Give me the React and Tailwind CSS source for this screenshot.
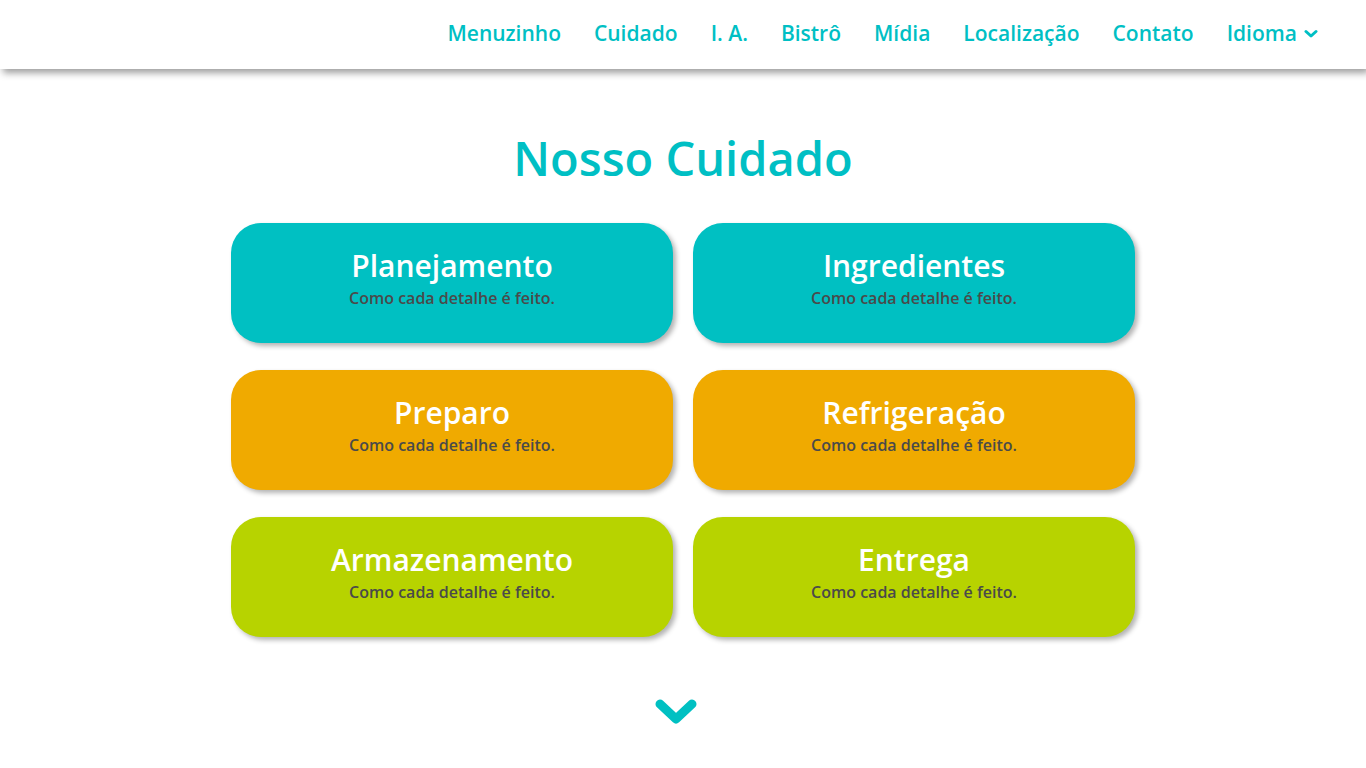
import React from "react";

const links = ["Menuzinho", "Cuidado", "I. A.", "Bistrô", "Mídia", "Localização", "Contato"];

const cards = [
  { title: "Planejamento", color: "bg-[#00c0c2]" },
  { title: "Ingredientes", color: "bg-[#00c0c2]" },
  { title: "Preparo", color: "bg-[#f0aa00]" },
  { title: "Refrigeração", color: "bg-[#f0aa00]" },
  { title: "Armazenamento", color: "bg-[#b7d300]" },
  { title: "Entrega", color: "bg-[#b7d300]" },
];

export default function App() {
  return (
    <div className="min-h-screen bg-white font-['Open_Sans',sans-serif]">
      <header className="h-[69px] bg-white shadow-[3px_4px_7px_rgba(0,0,0,0.38)] flex items-center justify-end pr-[48px] pb-[2px]">
        <nav className="flex items-center gap-[33px] text-[#00bfc4] text-[21px] font-semibold">
          {links.map((l) => (
            <a key={l} href="#" className="leading-none">
              {l}
            </a>
          ))}
          <a href="#" className="flex items-center gap-[7px] leading-none">
            Idioma
            <svg width="14" height="10" viewBox="0 0 14 10">
              <path d="M2 2.5 L7 7 L12 2.5" fill="none" stroke="#00bfc4" strokeWidth="3" strokeLinecap="round" strokeLinejoin="round" />
            </svg>
          </a>
        </nav>
      </header>

      <main className="flex flex-col items-center">
        <h1 className="mt-[66px] text-[47px] font-semibold text-[#00bfc4] leading-none">Nosso Cuidado</h1>
        <div className="mt-[41px] grid grid-cols-[442px_442px] gap-x-[20px] gap-y-[27px]">
          {cards.map((c) => (
            <div
              key={c.title}
              className={`${c.color} h-[120px] rounded-[30px] shadow-[3px_3px_5px_rgba(0,0,0,0.3)] flex flex-col items-center pt-[25px]`}
            >
              <div className="text-white text-[30px] font-semibold leading-[36px]">{c.title}</div>
              <div className="mt-[4px] text-[#4a4a4a] text-[16px] font-semibold leading-[20px]">Como cada detalhe é feito.</div>
            </div>
          ))}
        </div>
        <svg className="mt-[62px] mr-[15px]" width="42" height="28" viewBox="0 0 42 28">
          <path d="M5 5 L21 20 L37 5" fill="none" stroke="#00c0c2" strokeWidth="9" strokeLinecap="round" strokeLinejoin="round" />
        </svg>
      </main>
    </div>
  );
}
